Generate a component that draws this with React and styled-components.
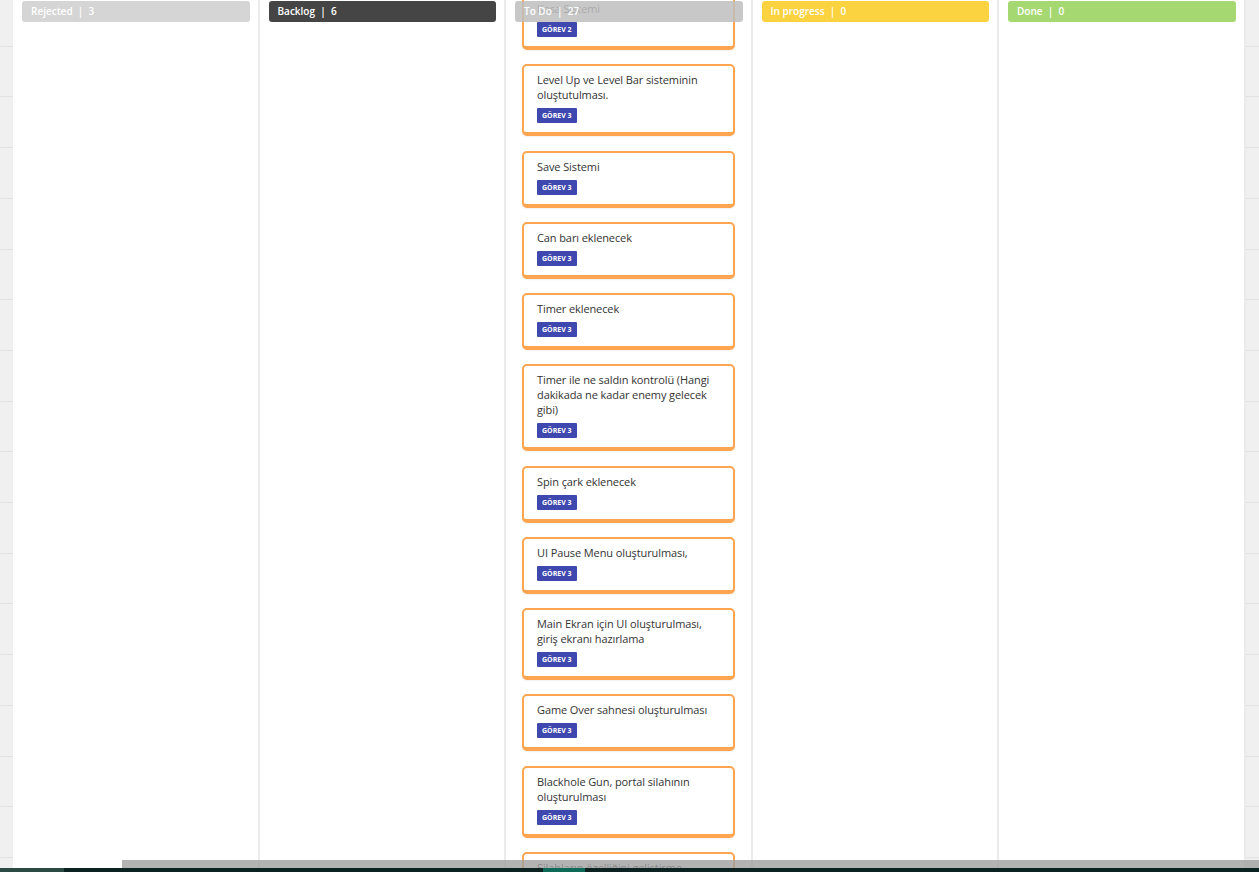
import React from "react"
import styled, { createGlobalStyle } from "styled-components"

const GlobalStyle = createGlobalStyle`
  html, body {
    margin: 0;
    padding: 0;
    height: 100%;
    overflow: hidden;
  }
  body {
    font-family: "Open Sans", "Liberation Sans", sans-serif;
    background-color: #f0f0f0;
    background-image: repeating-linear-gradient(
      to bottom,
      transparent 0,
      transparent 45.7px,
      #e2e2e2 45.7px,
      #e2e2e2 46.7px,
      transparent 46.7px,
      transparent 50.7px
    );
  }
`

const Page = styled.div`
  position: relative;
  height: 872px;
  overflow: hidden;
`

const Board = styled.div`
  display: flex;
  flex-direction: row;
  padding-left: 13px;
  height: 868px;
`

const Column = styled.div`
  flex: 0 0 246.5px;
  box-sizing: border-box;
  background: #fff;
  border-right: 2px solid #ebebeb;
  padding: 0 8px 0 9px;
  display: flex;
  flex-direction: column;
  overflow: hidden;
`

const Header = styled.div`
  position: relative;
  z-index: 2;
  flex-shrink: 0;
  margin-top: 1px;
  height: 21px;
  border-radius: 3px;
  background: ${p => p.$bg};
  color: #fff;
  font-size: 10px;
  font-weight: 600;
  line-height: 21px;
  padding-left: 9px;
  white-space: pre;
`

const CardList = styled.div`
  display: flex;
  flex-direction: column;
  gap: 14.25px;
  padding: 0 8px 0 7px;
  margin-top: ${p => p.$offset || 0}px;
`

const Card = styled.div`
  flex-shrink: 0;
  display: flex;
  flex-direction: column;
  align-items: flex-start;
  gap: 6px;
  background: #fff;
  border: 2px solid #ffa54f;
  border-bottom-width: 4px;
  border-radius: 5px;
  padding: 6px 13px 9px 13px;
  box-shadow: 0 1px 2px rgba(0, 0, 0, 0.06);
`

const CardText = styled.div`
  font-size: 11px;
  line-height: 15px;
  color: #333;
  letter-spacing: -0.1px;
`

const Badge = styled.span`
  display: block;
  height: 15px;
  line-height: 15px;
  padding: 0 5px;
  background: #3f48ae;
  color: #fff;
  font-size: 7px;
  font-weight: 700;
  border-radius: 1px;
`

const ScrollBar = styled.div`
  position: absolute;
  left: 122px;
  right: 0;
  bottom: 4px;
  height: 8px;
  background: rgba(160, 160, 160, 0.8);
`

const Taskbar = styled.div`
  position: absolute;
  left: 0;
  right: 0;
  bottom: 0;
  height: 4px;
  display: flex;
  background: #0b2220;
`

const TaskItem = styled.div`
  width: ${p => p.$w}px;
  margin-left: ${p => p.$ml || 0}px;
  background: ${p => p.$bg};
`

const columns = [
  { title: "Rejected", count: 3, bg: "#d5d5d5" },
  { title: "Backlog", count: 6, bg: "#454545" },
  { title: "To Do", count: 27, bg: "rgba(190, 190, 190, 0.85)" },
  { title: "In progress", count: 0, bg: "#fbd240" },
  { title: "Done", count: 0, bg: "#a6d872" },
]

const todo = [
  { text: "Kasa Sistemi", tag: "GÖREV 2" },
  { text: "Level Up ve Level Bar sisteminin oluştutulması.", tag: "GÖREV 3" },
  { text: "Save Sistemi", tag: "GÖREV 3" },
  { text: "Can barı eklenecek", tag: "GÖREV 3" },
  { text: "Timer eklenecek", tag: "GÖREV 3" },
  { text: "Timer ile ne saldın kontrolü (Hangi dakikada ne kadar enemy gelecek gibi)", tag: "GÖREV 3" },
  { text: "Spin çark eklenecek", tag: "GÖREV 3" },
  { text: "UI Pause Menu oluşturulması,", tag: "GÖREV 3" },
  { text: "Main Ekran için UI oluşturulması, giriş ekranı hazırlama", tag: "GÖREV 3" },
  { text: "Game Over sahnesi oluşturulması", tag: "GÖREV 3" },
  { text: "Blackhole Gun, portal silahının oluşturulması", tag: "GÖREV 3" },
  { text: "Silahların özelliğini geliştirme", tag: "GÖREV 3" },
  { text: "Düşman çeşitliliği", tag: "GÖREV 3" },
]

const App = () => {
  return (
    <Page>
      <GlobalStyle />
      <Board>
        {columns.map(col => (
          <Column key={col.title}>
            <Header $bg={col.bg}>{col.title + "  |  " + col.count}</Header>
            {col.title === "To Do" && (
              <CardList $offset={-29}>
                {todo.map((c, i) => (
                  <Card key={i}>
                    <CardText>{c.text}</CardText>
                    <Badge>{c.tag}</Badge>
                  </Card>
                ))}
              </CardList>
            )}
          </Column>
        ))}
      </Board>
      <ScrollBar />
      <Taskbar>
        <TaskItem $w={64} $bg="#2c4a44" />
        <TaskItem $w={42} $ml={479} $bg="#0e6a58" />
      </Taskbar>
    </Page>
  )
}

export default App
